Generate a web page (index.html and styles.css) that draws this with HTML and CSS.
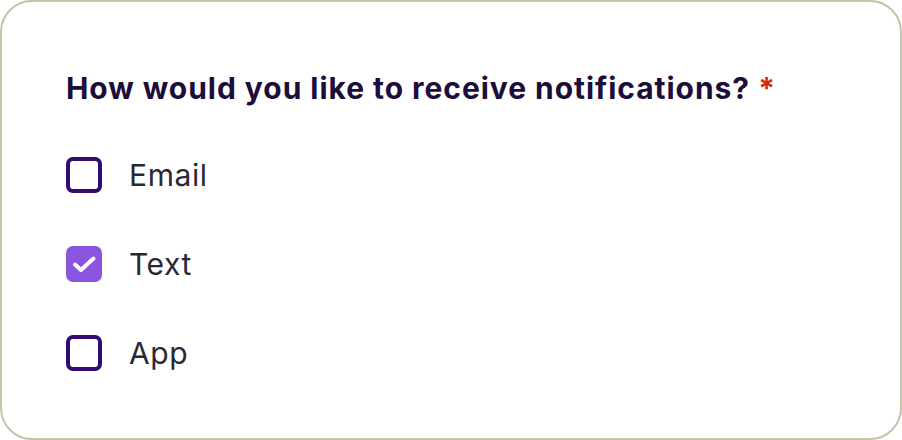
FILE: index.html
```html
<!DOCTYPE html>
<html>
<head>
<meta charset="utf-8">
<link rel="stylesheet" href="styles.css">
</head>
<body>
<div class="card">
  <div class="group" role="group">
    <div class="question">How would you like to receive notifications? <span class="req">*</span></div>
    <div class="options">
      <label class="option">
        <span class="box"></span>
        <span class="label">Email</span>
      </label>
      <label class="option">
        <span class="box checked">
          <svg width="36" height="36" viewBox="0 0 36 36"><path d="M9 18.5L15 24L27.5 12.5" fill="none" stroke="#fff" stroke-width="4" stroke-linecap="round" stroke-linejoin="round"/></svg>
        </span>
        <span class="label">Text</span>
      </label>
      <label class="option">
        <span class="box"></span>
        <span class="label">App</span>
      </label>
    </div>
  </div>
</div>
</body>
</html>
```
FILE: styles.css
```css
html, body { margin: 0; padding: 0; background: #fff; }
body { font-family: Inter, "Noto Sans", sans-serif; }
.card {
  box-sizing: border-box;
  width: 902px;
  height: 440px;
  border: 2px solid #c5c2a8;
  border-radius: 32px;
  padding: 68px 64px 0 64px;
}
.group { display: flex; flex-direction: column; gap: 51px; }
.question {
  font-size: 30px;
  font-weight: 700;
  color: #1d0d3a;
  line-height: 36px;
  letter-spacing: 0.95px;
}
.req { color: #d42a0a; }
.options { display: flex; flex-direction: column; gap: 53px; }
.option { display: flex; align-items: center; gap: 27px; height: 36px; }
.box {
  box-sizing: border-box;
  width: 36px; height: 36px;
  border: 4px solid #350a6e;
  border-radius: 7px;
  display: flex; align-items: center; justify-content: center;
  flex: none;
}
.box.checked { background: #8b55e0; border: 0; }
.label { font-size: 30px; color: #2a2833; line-height: 36px; letter-spacing: 0.6px; }
```
